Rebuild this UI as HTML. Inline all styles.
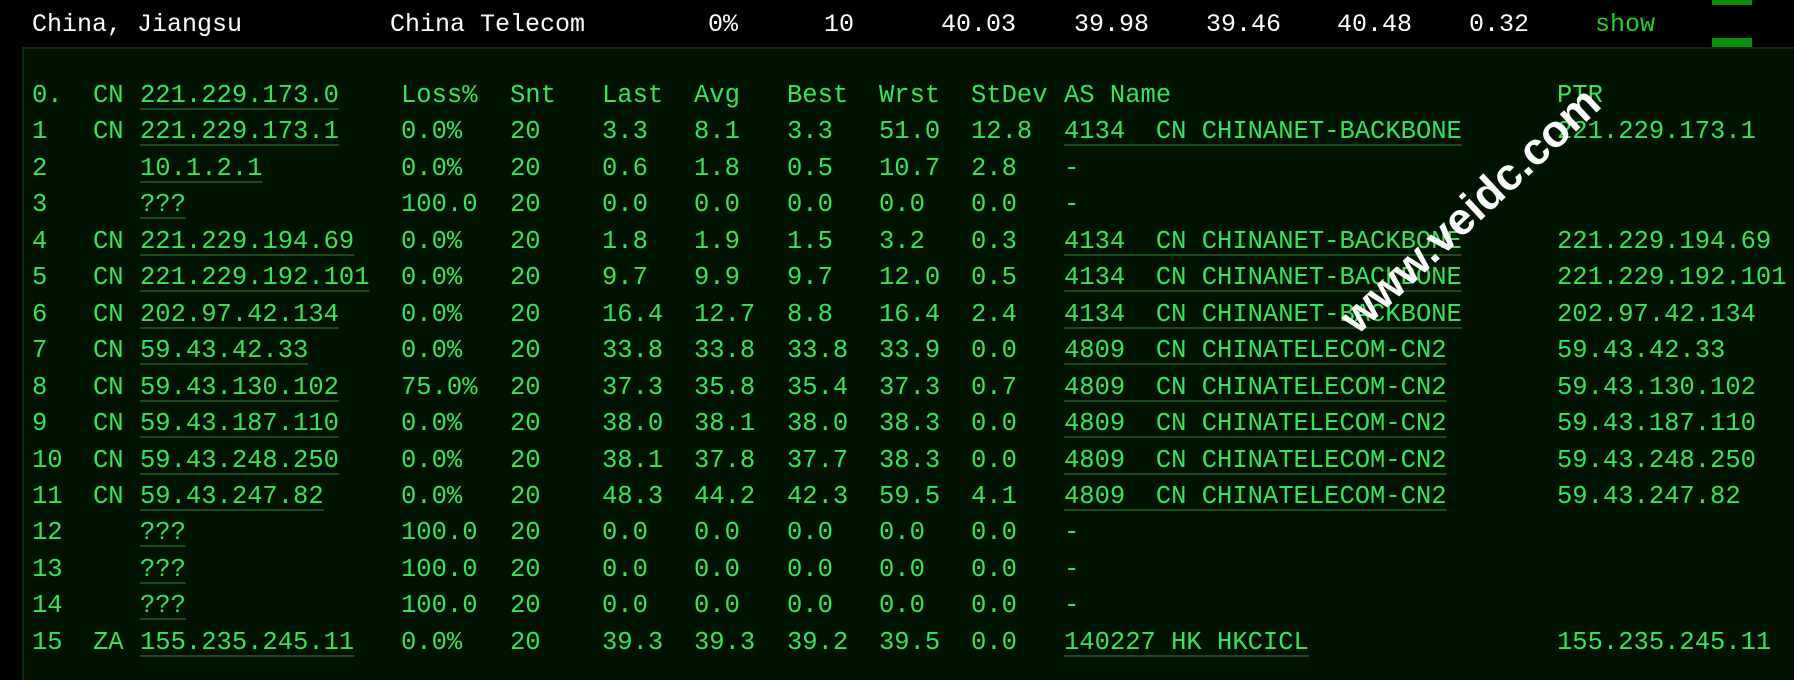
<!DOCTYPE html>
<html><head><meta charset="utf-8"><style>
html,body{margin:0;padding:0;background:#000;width:1794px;height:680px;overflow:hidden;position:relative;font-family:"Liberation Mono","DejaVu Sans Mono",monospace;}
.h{position:absolute;top:10px;color:#fff;font-size:25px;line-height:30px;white-space:pre}
.bar{position:absolute;left:1712px;width:40px;height:9px;background:#0a8f0a}
#panel{position:absolute;left:22px;top:47px;width:1780px;height:640px;background:#001200;border-top:2px solid #0d2a0d;border-left:2px solid #0d2a0d}
.r{position:absolute;left:0;height:36px;color:#36e455;font-size:25.5px;line-height:36px;white-space:pre}
.r span{position:absolute;top:0}
.u{text-decoration:underline;text-decoration-color:#1d4a1d;text-decoration-thickness:2px;text-underline-offset:6px}
#wm{position:absolute;left:1295px;top:185px;width:350px;text-align:center;color:#fff;font-family:"Liberation Sans",sans-serif;font-weight:bold;font-size:45px;transform:rotate(-43deg);white-space:nowrap;line-height:50px}
</style></head><body>
<div class="h" style="left:32px">China, Jiangsu</div>
<div class="h" style="left:390px">China Telecom</div>
<div class="h" style="left:708px">0%</div>
<div class="h" style="left:824px">10</div>
<div class="h" style="left:941px">40.03</div>
<div class="h" style="left:1074px">39.98</div>
<div class="h" style="left:1206px">39.46</div>
<div class="h" style="left:1337px">40.48</div>
<div class="h" style="left:1469px">0.32</div>
<div class="h" style="left:1595px;color:#1ed41e">show</div>
<div class="bar" style="top:0;height:5px"></div>
<div class="bar" style="top:38px"></div>
<div id="panel"></div>
<div id="rows"></div>
<script>
var rows=[
["0.","CN","221.229.173.0","Loss%","Snt","Last","Avg","Best","Wrst","StDev","AS Name","PTR",0],
["1","CN","221.229.173.1","0.0%","20","3.3","8.1","3.3","51.0","12.8","4134  CN CHINANET-BACKBONE","221.229.173.1",1],
["2","","10.1.2.1","0.0%","20","0.6","1.8","0.5","10.7","2.8","-","",0],
["3","","???","100.0","20","0.0","0.0","0.0","0.0","0.0","-","",0],
["4","CN","221.229.194.69","0.0%","20","1.8","1.9","1.5","3.2","0.3","4134  CN CHINANET-BACKBONE","221.229.194.69",1],
["5","CN","221.229.192.101","0.0%","20","9.7","9.9","9.7","12.0","0.5","4134  CN CHINANET-BACKBONE","221.229.192.101",1],
["6","CN","202.97.42.134","0.0%","20","16.4","12.7","8.8","16.4","2.4","4134  CN CHINANET-BACKBONE","202.97.42.134",1],
["7","CN","59.43.42.33","0.0%","20","33.8","33.8","33.8","33.9","0.0","4809  CN CHINATELECOM-CN2","59.43.42.33",1],
["8","CN","59.43.130.102","75.0%","20","37.3","35.8","35.4","37.3","0.7","4809  CN CHINATELECOM-CN2","59.43.130.102",1],
["9","CN","59.43.187.110","0.0%","20","38.0","38.1","38.0","38.3","0.0","4809  CN CHINATELECOM-CN2","59.43.187.110",1],
["10","CN","59.43.248.250","0.0%","20","38.1","37.8","37.7","38.3","0.0","4809  CN CHINATELECOM-CN2","59.43.248.250",1],
["11","CN","59.43.247.82","0.0%","20","48.3","44.2","42.3","59.5","4.1","4809  CN CHINATELECOM-CN2","59.43.247.82",1],
["12","","???","100.0","20","0.0","0.0","0.0","0.0","0.0","-","",0],
["13","","???","100.0","20","0.0","0.0","0.0","0.0","0.0","-","",0],
["14","","???","100.0","20","0.0","0.0","0.0","0.0","0.0","-","",0],
["15","ZA","155.235.245.11","0.0%","20","39.3","39.3","39.2","39.5","0.0","140227 HK HKCICL","155.235.245.11",1]];
var xs=[32,93,140,401,510,602,694,787,879,971,1064,1557];
var h="";
rows.forEach(function(r,i){
 h+='<div class="r" style="top:'+(78+36.45*i)+'px">';
 for(var c=0;c<12;c++){
  var cls=(c==2||(c==10&&r[12]))?' class="u"':'';
  h+='<span'+cls+' style="left:'+xs[c]+'px">'+r[c]+'</span>';
 }
 h+='</div>';
});
document.getElementById('rows').innerHTML=h;
</script>
<div id="wm">www.veidc.com</div>
</body></html>
